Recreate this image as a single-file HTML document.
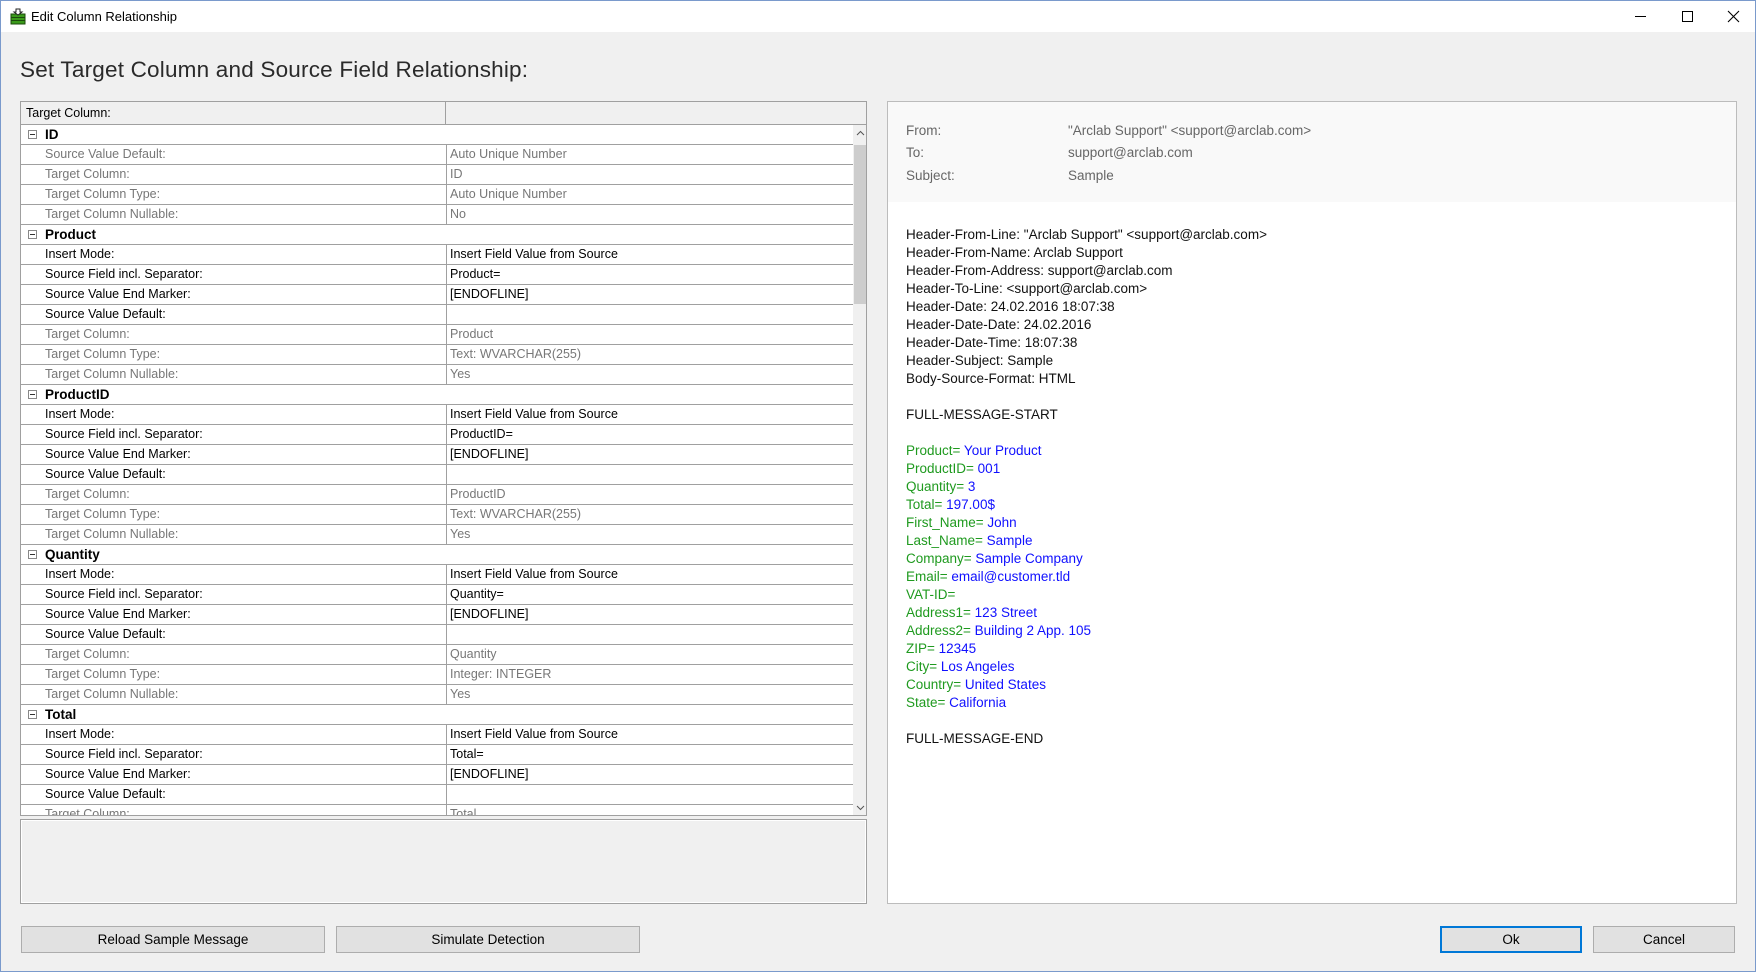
<!DOCTYPE html>
<html><head><meta charset="utf-8"><style>
*{margin:0;padding:0;box-sizing:border-box}
body{width:1756px;height:972px;overflow:hidden;background:#f0f0f0;font-family:"Liberation Sans",sans-serif;position:relative;border:1px solid #7a9acc}
.abs{position:absolute}
#tb{left:0;top:0;width:1754px;height:31px;background:#fff}
#tb .t{left:30px;top:8px;font-size:13px;color:#000}
h1{position:absolute;left:19px;top:56px;font-weight:normal;font-size:22.5px;color:#2a2a2a;letter-spacing:0.2px}
#grid{left:19px;top:100px;width:847px;height:715px;background:#fff;border:1px solid #a0a0a0;overflow:hidden}
.row{position:absolute;left:0;width:832px;height:20px;border-bottom:1px solid #a0a0a0;font-size:12.5px;line-height:19px;white-space:nowrap}
.row .l{position:absolute;left:24px;top:0}
.row .v{position:absolute;left:425px;top:0;height:20px;border-left:1px solid #a0a0a0;padding-left:3px;width:407px}
.g{color:#777}
.grp{font-weight:bold;font-size:13.5px}
.mb{position:absolute;left:7px;top:5px;width:9px;height:9px;border:1px solid #888;background:#fff}
.mb:after{content:"";position:absolute;left:1px;top:3px;width:5px;height:1px;background:#333}
#hdr{left:0;top:0;width:847px;height:23px;background:#f0f0f0;border-bottom:1px solid #a0a0a0;font-size:12.5px}
#sb{left:832px;top:23px;width:15px;height:692px;background:#f0f0f0}
#box{left:19px;top:818px;width:847px;height:85px;border:1px solid #a0a0a0;background:#f0f0f0;box-shadow:inset 0 0 0 1px #fff}
.btn{position:absolute;height:27px;background:#e1e1e1;border:1px solid #adadad;font-size:13.5px;text-align:center;line-height:25px;color:#000}
#rp{left:886px;top:100px;width:850px;height:803px;background:#fff;border:1px solid #bcbcbc}
#rh{left:0;top:0;width:848px;height:100px;background:#f9f9f9}
.rt{font-size:13.5px;color:#666;position:absolute}
#body{left:18px;top:124px;font-size:13.5px;line-height:18px;color:#111;white-space:pre}
.k{color:#1f9a1f}.b{color:#1010ff}
</style></head><body>
<div id="tb" class="abs">
<svg class="abs" style="left:9px;top:7px" width="16" height="17" viewBox="0 0 16 17"><rect x="1" y="6" width="14" height="10" fill="#3a9a1a" stroke="#1a4a0a"/><line x1="1" y1="9.5" x2="15" y2="9.5" stroke="#1a4a0a"/><line x1="1" y1="12.5" x2="15" y2="12.5" stroke="#1a4a0a"/><path d="M6 1h4v3h2l-4 3-4-3h2z" fill="#fff" stroke="#222"/></svg>
<div class="t abs">Edit Column Relationship</div>
<div class="abs" style="left:1634px;top:15px;width:11px;height:1px;background:#000"></div>
<div class="abs" style="left:1681px;top:10px;width:11px;height:11px;border:1px solid #000"></div>
<svg class="abs" style="left:1726px;top:9px" width="13" height="13"><path d="M1 1L12 12M12 1L1 12" stroke="#000" stroke-width="1.1"/></svg>
</div>
<h1>Set Target Column and Source Field Relationship:</h1>
<div id="grid" class="abs">
<div id="hdr" class="abs"><span class="abs" style="left:5px;top:4px">Target Column:</span><span class="abs" style="left:424px;top:0;width:1px;height:23px;background:#a0a0a0"></span></div>
<div id="rows"></div>
<div id="sb" class="abs">
<svg class="abs" style="left:3px;top:5px" width="9" height="6"><path d="M1 5L4.5 1.5L8 5" stroke="#555" fill="none"/></svg>
<div class="abs" style="left:1px;top:20px;width:13px;height:159px;background:#cdcdcd"></div>
<svg class="abs" style="left:3px;top:680px" width="9" height="6"><path d="M1 1L4.5 4.5L8 1" stroke="#555" fill="none"/></svg>
</div>
</div>
<div id="box" class="abs"></div>
<div class="btn" style="left:20px;top:925px;width:304px">Reload Sample Message</div>
<div class="btn" style="left:335px;top:925px;width:304px">Simulate Detection</div>
<div class="btn" style="left:1439px;top:925px;width:142px;border:1px solid #0078d7;box-shadow:inset 0 0 0 1px #0078d7">Ok</div>
<div class="btn" style="left:1592px;top:925px;width:142px">Cancel</div>
<div id="rp" class="abs">
<div id="rh" class="abs">
<div class="rt" style="left:18px;top:21px">From:</div><div class="rt" style="left:180px;top:21px">"Arclab Support" &lt;support@arclab.com&gt;</div>
<div class="rt" style="left:18px;top:43px">To:</div><div class="rt" style="left:180px;top:43px">support@arclab.com</div>
<div class="rt" style="left:18px;top:66px">Subject:</div><div class="rt" style="left:180px;top:66px">Sample</div>
</div>
<div id="body" class="abs">Header-From-Line: "Arclab Support" &lt;support@arclab.com&gt;
Header-From-Name: Arclab Support
Header-From-Address: support@arclab.com
Header-To-Line: &lt;support@arclab.com&gt;
Header-Date: 24.02.2016 18:07:38
Header-Date-Date: 24.02.2016
Header-Date-Time: 18:07:38
Header-Subject: Sample
Body-Source-Format: HTML

FULL-MESSAGE-START

<span class="k">Product=</span><span class="b"> Your Product</span>
<span class="k">ProductID=</span><span class="b"> 001</span>
<span class="k">Quantity=</span><span class="b"> 3</span>
<span class="k">Total=</span><span class="b"> 197.00$</span>
<span class="k">First_Name=</span><span class="b"> John</span>
<span class="k">Last_Name=</span><span class="b"> Sample</span>
<span class="k">Company=</span><span class="b"> Sample Company</span>
<span class="k">Email=</span><span class="b"> email@customer.tld</span>
<span class="k">VAT-ID=</span>
<span class="k">Address1=</span><span class="b"> 123 Street</span>
<span class="k">Address2=</span><span class="b"> Building 2 App. 105</span>
<span class="k">ZIP=</span><span class="b"> 12345</span>
<span class="k">City=</span><span class="b"> Los Angeles</span>
<span class="k">Country=</span><span class="b"> United States</span>
<span class="k">State=</span><span class="b"> California</span>

FULL-MESSAGE-END</div>
</div>
<script>
var d=[["G","ID"],["g","Source Value Default:","Auto Unique Number"],["g","Target Column:","ID"],["g","Target Column Type:","Auto Unique Number"],["g","Target Column Nullable:","No"]];
function add(n,tp){d.push(["G",n],["e","Insert Mode:","Insert Field Value from Source"],["e","Source Field incl. Separator:",n+"="],["e","Source Value End Marker:","[ENDOFLINE]"],["e","Source Value Default:",""],["g","Target Column:",n],["g","Target Column Type:",tp],["g","Target Column Nullable:","Yes"]);}
add("Product","Text: WVARCHAR(255)");add("ProductID","Text: WVARCHAR(255)");add("Quantity","Integer: INTEGER");add("Total","Text: WVARCHAR(255)");
var h="";d.forEach(function(r,i){var y=23+i*20;if(y>720)return;
if(r[0]=="G")h+='<div class="row grp" style="top:'+y+'px"><span class="mb"></span><span class="l" style="left:24px">'+r[1]+'</span></div>';
else h+='<div class="row '+(r[0]=="g"?"g":"")+'" style="top:'+y+'px"><span class="l">'+r[1]+'</span><span class="v">'+r[2]+'</span></div>';});
document.getElementById("rows").innerHTML=h;
</script>
</body></html>
